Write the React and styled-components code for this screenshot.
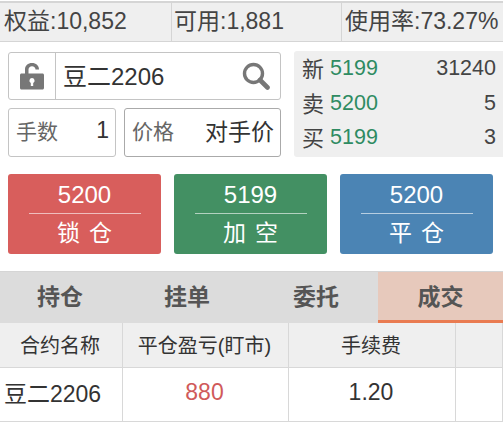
import styled, { createGlobalStyle } from "styled-components";

const GlobalStyle = createGlobalStyle`
  html, body {
    margin: 0;
    padding: 0;
    background: #fff;
  }
  body {
    font-family: "Liberation Sans", "Noto Sans CJK SC", sans-serif;
    color: #333;
  }
  * {
    box-sizing: border-box;
  }
`;

const Page = styled.div`
  width: 503px;
  height: 436px;
  overflow: hidden;
  padding-top: 1px;
`;

const Summary = styled.div`
  display: grid;
  grid-template-columns: 171px 170px 162px;
  height: 41px;
  background: #efefef;
  border-top: 2px solid #d5d5d5;
  border-bottom: 1px solid #d5d5d5;
`;

const SummaryCell = styled.div`
  padding-left: ${(p) => p.$pad}px;
  font-size: 23px;
  line-height: 36px;
  color: #444;
  white-space: nowrap;
  border-left: ${(p) => (p.$divider ? "1px solid #d5d5d5" : "none")};
`;

const Controls = styled.div`
  display: grid;
  grid-template-columns: 273px 209px;
  column-gap: 13px;
  padding: 9px 0 0 8px;
`;

const LeftColumn = styled.div`
  display: flex;
  flex-direction: column;
  gap: 8px;
  padding-top: 1px;
`;

const SearchBox = styled.div`
  display: flex;
  align-items: center;
  height: 48px;
  border: 1px solid #c4c4c4;
  border-radius: 3px;
`;

const LockCell = styled.div`
  display: flex;
  align-items: center;
  justify-content: center;
  width: 47px;
  height: 100%;
  border-right: 1px solid #c4c4c4;
`;

const SearchText = styled.div`
  flex: 1;
  padding: 0 0 4px 7px;
  font-size: 24px;
  color: #333;
`;

const SearchIcon = styled.svg`
  margin-right: 10px;
`;

const FieldRow = styled.div`
  display: flex;
  gap: 8px;
`;

const Field = styled.div`
  display: flex;
  align-items: center;
  justify-content: space-between;
  width: ${(p) => p.$w}px;
  height: 49px;
  padding: 0 6px 5px 7px;
  border: 1px solid ${(p) => (p.$dark ? "#aaa" : "#c4c4c4")};
  border-radius: 3px;
`;

const FieldLabel = styled.span`
  font-size: 21px;
  color: #666;
`;

const FieldValue = styled.span`
  font-size: 23px;
  color: #333;
`;

const QuotePanel = styled.div`
  display: flex;
  flex-direction: column;
  justify-content: center;
  height: 106px;
  padding: 0 7px 2px 8px;
  background: #efefef;
  border-radius: 3px 0 0 3px;
`;

const QuoteRow = styled.div`
  display: flex;
  align-items: center;
  height: 34.500px;
  font-size: 21.500px;
  color: #444;
`;

const QuoteLabel = styled.span`
  padding-bottom: 3px;
  font-size: 22px;
`;

const QuotePrice = styled.span`
  margin-left: 6px;
  color: #2e8b62;
`;

const QuoteVolume = styled.span`
  margin-left: auto;
`;

const Actions = styled.div`
  display: grid;
  grid-template-columns: repeat(3, 153px);
  column-gap: 13px;
  padding: 17px 0 0 8px;
`;

const ActionButton = styled.div`
  display: flex;
  flex-direction: column;
  align-items: center;
  height: 80px;
  background: ${(p) => p.$bg};
  border-radius: 3px;
  color: #fff;
`;

const ActionPrice = styled.div`
  width: 112px;
  height: 40px;
  border-bottom: 1px solid rgba(255, 255, 255, 0.6);
  font-size: 24px;
  line-height: 41px;
  text-align: center;
`;

const ActionLabel = styled.div`
  font-size: 23px;
  line-height: 39px;
  letter-spacing: 9px;
  margin-right: -9px;
`;

const Tabs = styled.div`
  display: grid;
  grid-template-columns: 120px 134px 124px 125px;
  height: 52px;
  margin-top: 17px;
  background: #dcdcdc;
  border-top: 1px solid #d5d5d5;
`;

const Tab = styled.div`
  height: 51px;
  font-size: 23px;
  font-weight: 700;
  line-height: 50px;
  text-align: center;
  color: #555;
  background: ${(p) => (p.$active ? "#e7c9bc" : "transparent")};
  border-bottom: 3px solid ${(p) => (p.$active ? "#e97b51" : "transparent")};
`;

const TableRow = styled.div`
  display: grid;
  grid-template-columns: 123px 166px 167px 47px;
  height: ${(p) => p.$h}px;
  background: ${(p) => (p.$head ? "#efefef" : "#fff")};
  border-bottom: 1px solid #d8d8d8;
`;

const Cell = styled.div`
  display: flex;
  align-items: center;
  justify-content: ${(p) => (p.$left ? "flex-start" : "center")};
  padding-left: ${(p) => (p.$left ? "4px" : "0")};
  padding-right: ${(p) => (p.$left ? "0" : "2px")};
  padding-bottom: ${(p) => (p.$head ? "2px" : "5px")};
  border-right: 1px solid #d8d8d8;
  font-size: ${(p) => (p.$head ? "20px" : "23px")};
  color: ${(p) => p.$color || "#333"};
  white-space: nowrap;
`;

function LockIcon() {
  return (
    <svg width="26" height="30" viewBox="0 0 26 30">
      <path d="M6 13V8.500C6 4.500 9 2 13 2s7 2.500 7 6.500H16.500C16.500 6.500 15 5.200 13 5.200S9.500 6.500 9.500 8.500V13z" fill="#777" />
      <path fillRule="evenodd" d="M2.500 12.500h21c.8 0 1.500.7 1.500 1.500v13c0 .8-.7 1.500-1.500 1.500h-21c-.8 0-1.500-.7-1.500-1.500V14c0-.8.7-1.500 1.500-1.500zM13 17a2.600 2.600 0 0 0-1.200 4.900V25h2.400v-3.100A2.600 2.600 0 0 0 13 17z" fill="#777" />
    </svg>
  );
}

function MagnifierIcon() {
  return (
    <SearchIcon width="28" height="28" viewBox="0 0 28 28">
      <circle cx="11.500" cy="11.500" r="9" fill="none" stroke="#777" strokeWidth="3.400" />
      <path d="M18 18l7.500 7.500" stroke="#777" strokeWidth="4.600" strokeLinecap="round" />
    </SearchIcon>
  );
}

function Quote({ label, price, volume }) {
  return (
    <QuoteRow>
      <QuoteLabel>{label}</QuoteLabel>
      <QuotePrice>{price}</QuotePrice>
      <QuoteVolume>{volume}</QuoteVolume>
    </QuoteRow>
  );
}

function Action({ bg, price, label }) {
  return (
    <ActionButton $bg={bg}>
      <ActionPrice>{price}</ActionPrice>
      <ActionLabel>{label}</ActionLabel>
    </ActionButton>
  );
}

export default function App() {
  return (
    <Page>
      <GlobalStyle />
      <Summary>
        <SummaryCell $pad={4}>权益:10,852</SummaryCell>
        <SummaryCell $pad={2} $divider>可用:1,881</SummaryCell>
        <SummaryCell $pad={3} $divider>使用率:73.27%</SummaryCell>
      </Summary>
      <Controls>
        <LeftColumn>
          <SearchBox>
            <LockCell>
              <LockIcon />
            </LockCell>
            <SearchText>豆二2206</SearchText>
            <MagnifierIcon />
          </SearchBox>
          <FieldRow>
            <Field $w={108}>
              <FieldLabel>手数</FieldLabel>
              <FieldValue>1</FieldValue>
            </Field>
            <Field $w={157} $dark>
              <FieldLabel>价格</FieldLabel>
              <FieldValue>对手价</FieldValue>
            </Field>
          </FieldRow>
        </LeftColumn>
        <QuotePanel>
          <Quote label="新" price="5199" volume="31240" />
          <Quote label="卖" price="5200" volume="5" />
          <Quote label="买" price="5199" volume="3" />
        </QuotePanel>
      </Controls>
      <Actions>
        <Action bg="#d85e5c" price="5200" label="锁仓" />
        <Action bg="#439063" price="5199" label="加空" />
        <Action bg="#4b84b4" price="5200" label="平仓" />
      </Actions>
      <Tabs>
        <Tab>持仓</Tab>
        <Tab>挂单</Tab>
        <Tab>委托</Tab>
        <Tab $active>成交</Tab>
      </Tabs>
      <TableRow $h={45} $head>
        <Cell $head>合约名称</Cell>
        <Cell $head>平仓盈亏(盯市)</Cell>
        <Cell $head>手续费</Cell>
        <Cell $head />
      </TableRow>
      <TableRow $h={54}>
        <Cell $left>豆二2206</Cell>
        <Cell $color="#d05a5a">880</Cell>
        <Cell>1.20</Cell>
        <Cell />
      </TableRow>
    </Page>
  );
}
